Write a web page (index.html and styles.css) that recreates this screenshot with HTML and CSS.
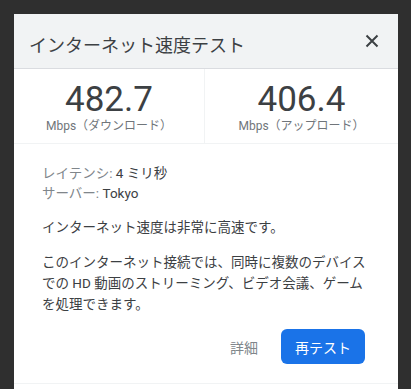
FILE: index.html
```html
<!DOCTYPE html>
<html lang="ja">
<head>
    <meta charset="UTF-8">
    <meta name="viewport" content="width=device-width, initial-scale=1.0">
    <title>インターネット速度テスト</title>
    <link rel="stylesheet" href="styles.css">
</head>
<body>
    <div class="dialog">
        <div class="header">
            <h1 class="title">インターネット速度テスト</h1>
            <button class="close" aria-label="閉じる">
                <svg width="14" height="14" viewBox="0 0 14 14">
                    <path d="M1.5 1.5 L12.5 12.5 M12.5 1.5 L1.5 12.5" stroke="#3c4043" stroke-width="2" fill="none"/>
                </svg>
            </button>
        </div>

        <!-- 速度 -->
        <div class="stats">
            <div class="stat">
                <div class="value">482.7</div>
                <div class="unit">Mbps（ダウンロード）</div>
            </div>
            <div class="stat">
                <div class="value">406.4</div>
                <div class="unit">Mbps（アップロード）</div>
            </div>
        </div>

        <div class="content">
            <div class="info">
                <div><span class="label">レイテンシ:</span> 4 ミリ秒</div>
                <div><span class="label">サーバー:</span> Tokyo</div>
            </div>
            <p class="text">インターネット速度は非常に高速です。</p>
            <p class="text">このインターネット接続では、同時に複数のデバイスでの HD 動画のストリーミング、ビデオ会議、ゲームを処理できます。</p>

            <div class="actions">
                <button class="link">詳細</button>
                <button class="primary">再テスト</button>
            </div>
        </div>

        <div class="footer"></div>
    </div>
</body>
</html>
```

FILE: styles.css
```css
body {
    margin: 0;
    padding: 14px 14px 0;
    background-color: #2f2f2f;
    font-family: Roboto, "Noto Sans CJK JP", sans-serif;
    color: #3c4043;
}

/* ダイアログ */
.dialog {
    width: 384px;
    background-color: #ffffff;
}

.header {
    display: flex;
    align-items: center;
    justify-content: space-between;
    height: 54px;
    padding: 0 19px 0 15px;
    background-color: #f1f3f4;
    border-bottom: 1px solid #dadce0;
}
.title {
    margin: 0;
    font-size: 18px;
    font-weight: 400;
    color: #3c4043;
    padding-top: 5px;
}
.close {
    display: flex;
    padding: 0;
    border: none;
    background: none;
    cursor: pointer;
}

/* 速度 */
.stats {
    display: grid;
    grid-template-columns: 191px 1fr;
    height: 74px;
    border-bottom: 1px solid #f1f3f4;
}
.stat {
    display: flex;
    flex-direction: column;
    align-items: center;
    padding-top: 12px;
}
.stat:first-child {
    border-right: 1px solid #f1f3f4;
}
.value {
    font-size: 35px;
    line-height: 38px;
    color: #3c4043;
}
.unit {
    font-size: 12px;
    line-height: 14px;
    color: #70757a;
}

/* 本文 */
.content {
    padding: 19px 24px 19px 28px;
    font-size: 13.5px;
}
.info {
    line-height: 20px;
}
.label {
    color: #80868b;
}
.text {
    margin: 14px 0 0;
    line-height: 21px;
}

.actions {
    display: flex;
    justify-content: flex-end;
    align-items: center;
    gap: 19px;
    margin-top: 14px;
    padding-right: 9px;
}
.actions button {
    font-family: inherit;
    font-size: 14px;
    border: none;
    cursor: pointer;
}
.link {
    background: none;
    color: #80868b;
    padding: 0 4px;
}
.primary {
    height: 35px;
    padding: 0 14px;
    background-color: #1a73e8;
    color: #ffffff;
    border-radius: 6px;
}

.footer {
    height: 5px;
    border-top: 1px solid #f1f3f4;
}
```
